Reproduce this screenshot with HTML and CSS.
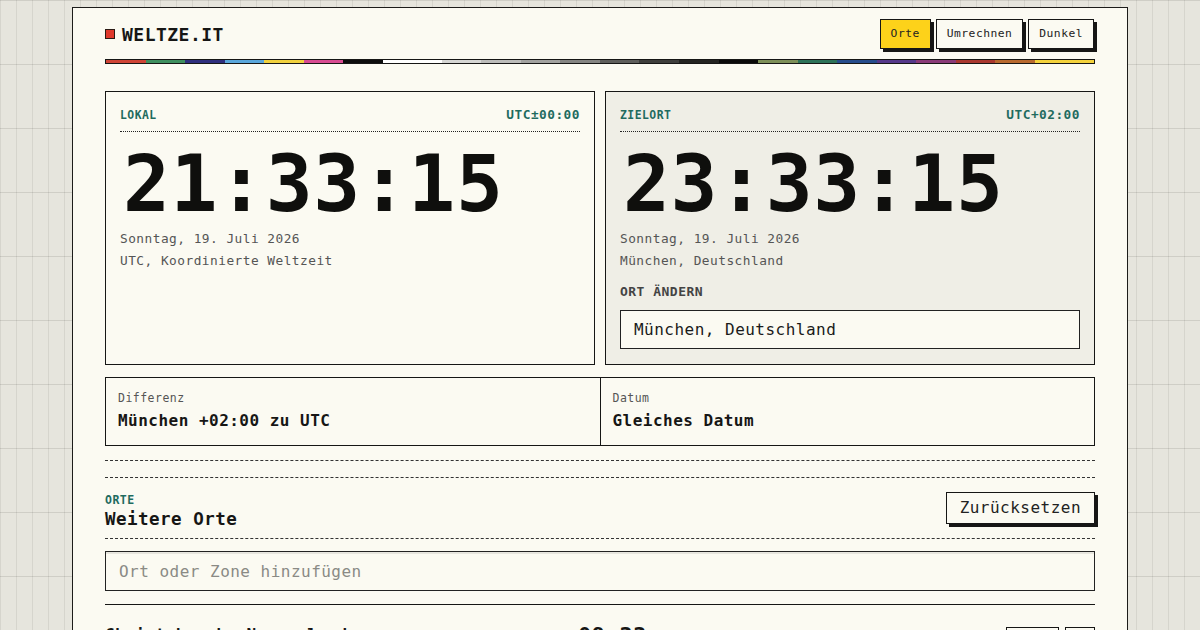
FILE: index.html
```html
<!DOCTYPE html>
<html lang="de">
<head>
<meta charset="UTF-8" />
<meta name="viewport" content="width=device-width, initial-scale=1.0"/>
<title>Weltze.it</title>
<link rel="stylesheet" href="styles.css">
</head>
<body>
<div class="page">
  <header class="topbar">
    <div class="brand"><span class="brand-mark"></span>WELTZE.IT</div>
    <nav class="nav">
      <button class="btn is-active">Orte</button>
      <button class="btn">Umrechnen</button>
      <button class="btn">Dunkel</button>
    </nav>
  </header>

  <div class="stripe">
    <span class="c1"></span><span class="c2"></span><span class="c3"></span><span class="c4"></span>
    <span class="c5"></span><span class="c6"></span><span class="c7"></span><span class="c8 wide"></span>
    <span class="c9"></span><span class="c10"></span><span class="c11"></span><span class="c12"></span>
    <span class="c13"></span><span class="c14"></span><span class="c15"></span><span class="c16"></span>
    <span class="c17"></span><span class="c18"></span><span class="c19"></span><span class="c20"></span>
    <span class="c21"></span><span class="c22"></span><span class="c23"></span><span class="c24 wide"></span>
  </div>

  <section class="clocks">
    <div class="clock-card">
      <div class="card-head">
        <span class="card-label">LOKAL</span>
        <span class="card-offset">UTC±00:00</span>
      </div>
      <div class="time">21:33:15</div>
      <p class="meta first">Sonntag, 19. Juli 2026</p>
      <p class="meta">UTC, Koordinierte Weltzeit</p>
    </div>

    <div class="clock-card is-target">
      <div class="card-head">
        <span class="card-label">ZIELORT</span>
        <span class="card-offset">UTC+02:00</span>
      </div>
      <div class="time">23:33:15</div>
      <p class="meta first">Sonntag, 19. Juli 2026</p>
      <p class="meta">München, Deutschland</p>
      <label class="field-label" for="target">ORT ÄNDERN</label>
      <input class="place-input" id="target" type="text" value="München, Deutschland">
    </div>
  </section>

  <section class="diff">
    <div class="diff-cell">
      <div class="diff-label">Differenz</div>
      <div class="diff-value">München +02:00 zu UTC</div>
    </div>
    <div class="diff-cell">
      <div class="diff-label">Datum</div>
      <div class="diff-value">Gleiches Datum</div>
    </div>
  </section>

  <div class="double-rule"></div>

  <section class="places-head">
    <div>
      <div class="section-label">ORTE</div>
      <h2 class="section-title">Weitere Orte</h2>
    </div>
    <button class="btn btn-lg">Zurücksetzen</button>
  </section>

  <input class="place-input add-input" type="text" placeholder="Ort oder Zone hinzufügen">

  <div class="place-list">
    <div class="place-row">
      <div class="place-name">Christchurch, Neuseeland</div>
      <div class="place-time">09:33</div>
      <div class="place-actions">
        <button class="btn btn-sm">Ziel</button>
        <button class="btn btn-sm">×</button>
      </div>
    </div>
  </div>
</div>
</body>
</html>
```

FILE: styles.css
```css
html, body {
  margin: 0;
}

body {
  font-family: "DejaVu Sans Mono", monospace;
  color: #161615;
  letter-spacing: 0.03em;
  background-color: #e6e5dd;
  background-image:
    linear-gradient(to right, rgba(0, 0, 0, 0.07) 1px, transparent 1px),
    linear-gradient(to bottom, rgba(0, 0, 0, 0.1) 1px, transparent 1px);
  background-size: 16px 100%, 100% 64px;
  min-height: 100vh;
}

.page {
  width: 1056px;
  box-sizing: border-box;
  margin: 7px auto 0;
  padding: 11px 32px 40px;
  border: 1px solid #1c1c1a;
  background: #fbfaf2;
}

/* header */
.topbar {
  display: flex;
  justify-content: space-between;
  align-items: center;
  height: 30px;
}

.brand {
  display: flex;
  align-items: center;
  gap: 7px;
  font-size: 18px;
  font-weight: 700;
}

.brand-mark {
  width: 8px;
  height: 8px;
  background: #e0392c;
  border: 1px solid #2a1a14;
}

.nav {
  display: flex;
  gap: 5px;
  padding-right: 1px;
}

.btn {
  font: inherit;
  letter-spacing: inherit;
  font-size: 11.3px;
  line-height: 16px;
  padding: 6px 10px;
  border: 1px solid #161615;
  background: #fbfaf2;
  color: #222;
  box-shadow: 3px 3px 0 #161615;
  cursor: pointer;
}

.btn.is-active {
  background: #fdd21a;
}

.btn-lg {
  font-size: 16px;
  line-height: 20px;
  padding: 5px 13px;
}

.btn-sm {
  font-size: 12px;
  line-height: 16px;
  padding: 6px 10px;
}

/* colour bar */
.stripe {
  display: flex;
  height: 3px;
  margin-top: 10px;
  border: 1px solid #161615;
}

.stripe span { flex: 2; }
.stripe .wide { flex: 3; }

.c1 { background: #cf4436; }
.c2 { background: #3f8f5f; }
.c3 { background: #2f2f7e; }
.c4 { background: #5aa7dc; }
.c5 { background: #f1d13e; }
.c6 { background: #d84b92; }
.c7 { background: #0d0d0d; }
.c8 { background: #ffffff; }
.c9 { background: #d6d6d4; }
.c10 { background: #bcbcba; }
.c11 { background: #a2a2a0; }
.c12 { background: #858583; }
.c13 { background: #5e5e5c; }
.c14 { background: #3e3e3c; }
.c15 { background: #232321; }
.c16 { background: #0a0a0a; }
.c17 { background: #7d8f58; }
.c18 { background: #2d7258; }
.c19 { background: #264c8c; }
.c20 { background: #55388a; }
.c21 { background: #8a3a78; }
.c22 { background: #a9372f; }
.c23 { background: #b8692f; }
.c24 { background: #f4d23c; }

/* clocks */
.clocks {
  display: grid;
  grid-template-columns: 1fr 1fr;
  gap: 10px;
  margin-top: 27px;
}

.clock-card {
  border: 1px solid #161615;
  padding: 15px 14px 15px;
}

.clock-card.is-target {
  background: #efeee6;
}

.card-head {
  display: flex;
  justify-content: space-between;
  align-items: baseline;
  padding-bottom: 8px;
  border-bottom: 1px dotted #222;
  color: #1f6b5f;
  font-weight: 700;
  line-height: 16px;
}

.card-label { font-size: 11.4px; }
.card-offset { font-size: 12.8px; }

.time {
  margin: 12px 0 0 3px;
  font-size: 78px;
  font-weight: 700;
  line-height: 80px;
  letter-spacing: 0.6px;
  color: #0f0f0d;
}

.meta {
  margin: 0;
  font-size: 12.8px;
  line-height: 22px;
  color: #555;
}

.meta.first {
  margin-top: 4px;
}

.field-label {
  display: block;
  margin-top: 12px;
  font-size: 13px;
  font-weight: 700;
  line-height: 16px;
  color: #444;
}

.place-input {
  display: block;
  width: 100%;
  box-sizing: border-box;
  margin: 10px 0 0;
  height: 39px;
  padding: 0 13px;
  border: 1px solid #222;
  border-radius: 0;
  background: #fbfaf2;
  font: inherit;
  letter-spacing: inherit;
  font-size: 16px;
  color: #1a1a1a;
  outline: none;
}

/* difference */
.diff {
  display: flex;
  margin-top: 12px;
  border: 1px solid #161615;
}

.diff-cell {
  flex: 1;
  padding: 13px 12px 14px;
}

.diff-cell + .diff-cell {
  border-left: 1px solid #161615;
}

.diff-label {
  font-size: 11.5px;
  line-height: 14px;
  color: #555;
}

.diff-value {
  margin-top: 6px;
  font-size: 16px;
  font-weight: 700;
  line-height: 20px;
}

.double-rule {
  margin-top: 14px;
  height: 16px;
  border-top: 1px dashed #333;
  border-bottom: 1px dashed #333;
}

/* places */
.places-head {
  display: flex;
  justify-content: space-between;
  align-items: flex-start;
  padding: 15px 0 8px;
  border-bottom: 1px dashed #333;
}

.places-head .btn-lg {
  margin-top: -1px;
}

.section-label {
  font-size: 11.5px;
  line-height: 14px;
  font-weight: 700;
  color: #1f6b5f;
}

.section-title {
  margin: 1px 0 0;
  font-size: 17.5px;
  line-height: 22px;
  font-weight: 700;
}

.add-input {
  margin-top: 12px;
  height: 40px;
  box-shadow: inset 0 2px 0 rgba(0, 0, 0, 0.08);
}

.add-input::placeholder {
  color: #8a8a85;
}

.place-list {
  margin-top: 13px;
  border-top: 1px solid #161615;
}

.place-row {
  display: flex;
  align-items: flex-start;
  padding-top: 20px;
}

.place-name {
  flex: 0 0 473px;
  font-size: 16px;
  font-weight: 700;
  line-height: 20px;
}

.place-time {
  margin-top: -3px;
  font-size: 22px;
  font-weight: 700;
  line-height: 28px;
  letter-spacing: 0.5px;
}

.place-actions {
  display: flex;
  gap: 6px;
  margin-left: auto;
  margin-top: 2px;
}
```
